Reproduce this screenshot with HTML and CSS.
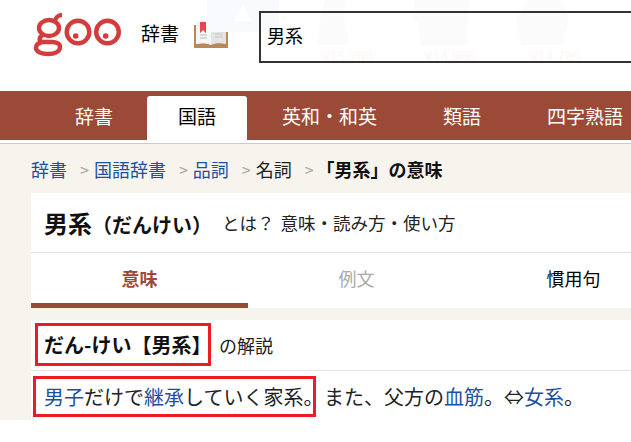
FILE: index.html
```html
<!DOCTYPE html>
<html lang="ja">
<head>
    <meta charset="UTF-8">
    <title>男系（だんけい）とは？ 意味・読み方・使い方</title>
    <link rel="stylesheet" href="styles.css">
</head>
<body>
    <header class="site-header">
        <!-- faded ad that sits behind the search box -->
        <div class="ghost-ad">
            <svg width="424" height="48" viewBox="0 0 424 48">
                <path d="M0 0h72v32H0z" fill="#f8fafd"/>
                <path d="M36 5l9 16H27z" fill="#fff"/>
                <path d="M118 0h22l-4 12 6 33h-32l4-30z" fill="#fbfbfb"/>
                <path d="M207 0h56l-2 20-3 26h-45l-2-24-5-3z" fill="#fbfbfb"/>
                <path d="M320 0h34l8 15-6 30h-42l-5-25z" fill="#fbfbfb"/>
            </svg>
            <span class="ghost-price price-a">¥15,290</span>
            <span class="ghost-price price-b">¥14,900</span>
            <span class="ghost-price price-c">¥14,795</span>
        </div>
        <div class="logo" aria-label="goo">
            <svg width="90" height="48" viewBox="0 0 90 48">
                <g fill="none" stroke="#d33c3c" stroke-width="4.4">
                    <ellipse cx="16" cy="17" rx="10" ry="8"/>
                    <path d="M22 11c0-4 3-7 7-7"/>
                    <path d="M10 24c-4 2-5 6 0 7h9c5 0 8 2 8 5 0 5-6 7-12 7s-12-2-12-6c0-3 2-5 6-6"/>
                    <circle cx="45" cy="21" r="11.3"/>
                    <circle cx="74.5" cy="21" r="11.3"/>
                </g>
                <circle cx="42.7" cy="25" r="2.8" fill="#d33c3c"/>
                <circle cx="72.7" cy="25" r="2.8" fill="#d33c3c"/>
            </svg>
        </div>
        <span class="site-name">辞書</span>
        <svg class="book" width="36" height="28" viewBox="0 0 36 28">
            <path d="M1 5h34v23H1z" fill="#b98859"/>
            <path d="M3 2c5-1 11-1 15 2 4-3 10-3 15-2v22c-5-1-11-1-15 1-4-2-10-2-15-1z" fill="#e4e4e4"/>
            <path d="M3 2c5-1 11-1 15 2v21c-4-2-10-2-15-1z" fill="#f6f6f6"/>
            <path d="M7 2h6v11l-3-3-3 3z" fill="#e2474f"/>
            <path d="M7 15h7M7 18h7M22 8h8M22 11h8M22 14h8M22 17h8" stroke="#cfcfcf" stroke-width="1.4"/>
        </svg>
        <div class="search-box">男系</div>
    </header>

    <nav class="tabs">
        <a class="tab">辞書</a>
        <a class="tab active">国語</a>
        <a class="tab">英和・和英</a>
        <a class="tab">類語</a>
        <a class="tab">四字熟語</a>
    </nav>

    <main class="page">
        <div class="crumbs">
            <a>辞書</a><i>&gt;</i>
            <a>国語辞書</a><i>&gt;</i>
            <a>品詞</a><i>&gt;</i>
            <span>名詞</span><i>&gt;</i>
            <strong>「男系」の意味</strong>
        </div>

        <div class="card">
            <div class="title-row">
                <h1>男系<small>（だんけい）</small></h1>
                <span class="title-sub">とは？ 意味・読み方・使い方</span>
            </div>
            <div class="sub-tabs">
                <div class="sub-tab current">意味</div>
                <div class="sub-tab muted">例文</div>
                <div class="sub-tab">慣用句</div>
            </div>
        </div>

        <section class="card entry">
            <div class="entry-head">
                <h2 class="marked">だん-けい【男系】</h2>
                <span>の解説</span>
            </div>
            <p class="entry-body"><span class="marked"><a>男子</a>だけで<a>継承</a>していく家系。</span><span class="rest">また、父方の<a>血筋</a>。⇔<a>女系</a>。</span></p>
        </section>
    </main>
</body>
</html>
```
FILE: styles.css
```css
* {
    box-sizing: border-box;
}

html, body {
    margin: 0;
    height: 100%;
    overflow: hidden;
}

body {
    background: #fff;
    color: #222;
    font-family: "Noto Sans CJK JP", "Liberation Sans", sans-serif;
    font-size: 18px;
    width: 631px;
}

a {
    color: #1d50a2;
}

.site-header {
    position: relative;
    height: 91px;
    display: flex;
    align-items: flex-start;
    padding: 11px 0 0 33px;
    white-space: nowrap;
}

.ghost-ad {
    position: absolute;
    left: 207px;
    top: 0;
    width: 424px;
    height: 70px;
    overflow: hidden;
}

.ghost-price {
    position: absolute;
    top: 46px;
    font-size: 14px;
    color: #fef5f5;
}

.price-a { left: 115px; }
.price-b { left: 218px; }
.price-c { left: 323px; }

.logo {
    width: 108px;
    height: 48px;
}

.site-name {
    font-size: 19px;
    line-height: 24px;
    color: #000;
    margin-top: 10px;
    width: 52px;
}

.book {
    margin-top: 9px;
    width: 36px;
}

.search-box {
    position: relative;
    margin-left: 30px;
    flex: 1;
    height: 52px;
    border: 2px solid #333;
    border-right: 0;
    padding: 0 6px;
    line-height: 44px;
    font-size: 18px;
    color: #000;
}

.tabs {
    height: 49px;
    background: #9b4a37;
    display: flex;
    align-items: flex-end;
    padding-left: 42px;
    white-space: nowrap;
    overflow: hidden;
}

.tab {
    padding: 0 33px;
    height: 44px;
    line-height: 40px;
    color: #fff;
    text-align: center;
    font-size: 19px;
    flex: none;
}

.tab.active {
    width: 100px;
    padding: 0;
    margin: 0 2px 0 1px;
    background: #fff;
    color: #000;
    border-radius: 3px 3px 0 0;
}

.page {
    margin-top: 3px;
    border-top: 1px solid #ccc;
    background: #f7f4ee;
    padding: 0 0 0 31px;
    height: 277px;
    overflow: hidden;
}

.crumbs {
    height: 49px;
    display: flex;
    align-items: center;
    font-size: 18px;
    white-space: nowrap;
}

.crumbs i {
    font-style: normal;
    color: #aaa;
    margin: 0 5px 0 13px;
    font-size: 16px;
}

.crumbs strong {
    color: #111;
    margin-left: -2px;
}

.card {
    background: #fff;
}

.title-row {
    height: 60px;
    display: flex;
    align-items: center;
    padding-left: 13px;
    white-space: nowrap;
    border-bottom: 1px solid #e3e3e3;
}

h1 {
    margin: 0;
    font-size: 24px;
    color: #111;
}

h1 small {
    font-size: 20px;
}

.title-sub {
    font-size: 17.5px;
    word-spacing: 2px;
    margin-left: 10px;
}

.sub-tabs {
    display: flex;
    height: 55px;
}

.sub-tab {
    width: 217px;
    text-align: center;
    line-height: 50px;
    font-size: 18px;
    color: #000;
    flex: none;
}

.sub-tab.current {
    color: #9b4a37;
    font-weight: bold;
    border-bottom: 5px solid #9b4a37;
}

.sub-tab.muted {
    color: #aaa;
}

.entry {
    margin-top: 12px;
    padding-top: 3px;
    height: 101px;
}

.entry-head {
    display: flex;
    align-items: center;
    height: 48px;
    padding: 0 0 4px 4px;
    border-bottom: 1px solid #e3e3e3;
    white-space: nowrap;
}

.entry-head span {
    font-size: 18px;
    margin-left: 8px;
}

h2 {
    margin: 0;
    width: 176px;
    height: 43px;
    flex: none;
    font-size: 20px;
    color: #111;
    line-height: 37px;
}

.marked {
    display: inline-block;
    border: 3px solid #ed1c24;
    padding: 0 0 0 6px;
}

.entry-body {
    margin: 5px 0 0 2px;
    font-size: 20px;
    line-height: 35px;
    white-space: nowrap;
}

.entry-body .marked {
    width: 283px;
    padding-left: 8px;
}

.rest {
    margin-left: 8px;
}
```
